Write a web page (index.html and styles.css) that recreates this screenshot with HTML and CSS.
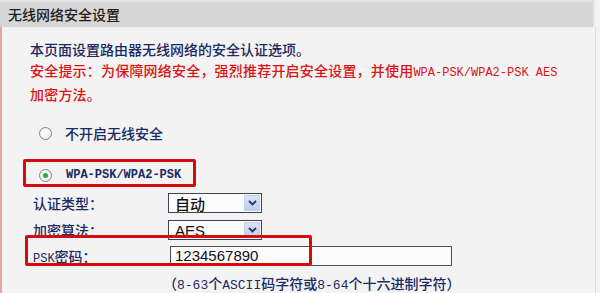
FILE: index.html
```html
<!DOCTYPE html>
<html lang="zh-CN">
<head>
<meta charset="utf-8">
<title>无线网络安全设置</title>
<link rel="stylesheet" href="styles.css">
</head>
<body>
<div class="page">
  <div class="header">无线网络安全设置</div>
  <div class="panel">
    <div class="intro">
      <p class="note">本页面设置路由器无线网络的安全认证选项。</p>
      <p class="warn">安全提示：为保障网络安全，强烈推荐开启安全设置，并使用<span class="en">WPA-PSK/WPA2-PSK AES</span></p>
      <p class="warn">加密方法。</p>
    </div>
    <div class="radio-row first">
      <span class="radio"></span>
      <span class="radio-label">不开启无线安全</span>
    </div>
    <div class="radio-row second">
      <span class="radio checked"></span>
      <span class="radio-label en bold">WPA-PSK/WPA2-PSK</span>
    </div>
    <div class="field auth">
      <span class="label">认证类型：</span>
      <span class="select"><span class="value">自动</span><span class="drop"><svg width="9" height="6" viewBox="0 0 9 6"><path d="M1 1 L4.5 4.5 L8 1" fill="none" stroke="#24356e" stroke-width="1.8"/></svg></span></span>
    </div>
    <div class="field algo">
      <span class="label">加密算法：</span>
      <span class="select"><span class="value latin">AES</span><span class="drop"><svg width="9" height="6" viewBox="0 0 9 6"><path d="M1 1 L4.5 4.5 L8 1" fill="none" stroke="#24356e" stroke-width="1.8"/></svg></span></span>
    </div>
    <div class="field psk">
      <span class="label"><span class="en">PSK</span>密码：</span>
      <span class="input">1234567890</span>
    </div>
    <p class="hint">（<span class="en wide">8-63</span>个<span class="en wide">ASCII</span>码字符或<span class="en wide">8-64</span>个十六进制字符）</p>
    <div class="mark mark-wpa"></div>
    <div class="mark mark-psk"></div>
  </div>
</div>
</body>
</html>
```
FILE: styles.css
```css
html, body {
  margin: 0;
  padding: 0;
  background: #f3f3f3;
}
.page {
  width: 600px;
  height: 293px;
  overflow: hidden;
  font-family: "Noto Sans CJK SC", "Noto Sans", sans-serif;
  font-size: 14px;
  font-weight: 500;
  color: #1b2a62;
}
.header {
  height: 27px;
  box-sizing: border-box;
  padding-left: 8px;
  background: #d6d6d6;
  border-top: 2px solid #e2e2e2;
  border-right: 2px solid #e6e6e6;
  line-height: 24px;
  color: #1e1e1e;
  font-size: 14px;
  margin-right: 5px;
}
.panel {
  position: relative;
  height: 266px;
  margin-right: 4px;
  border-left: 2px solid #e3a6a6;
  border-right: 1px solid #ead8d8;
  background: #f3f3f3;
}
.intro {
  padding-top: 12px;
  padding-left: 28px;
}
.intro p {
  margin: 0;
  line-height: 21px;
  white-space: nowrap;
}
.note { color: #1b2a62; }
.warn { color: #dc1414; letter-spacing: 0.2px; }
.en {
  font-family: "Liberation Mono", "Noto Sans CJK SC", monospace;
  font-size: 12px;
  letter-spacing: 0;
}
.en.wide { font-size: 13px; }
.bold { font-weight: bold; }
.radio-row {
  display: flex;
  align-items: center;
  height: 24px;
  padding-left: 37px;
}
.radio-row.first { margin-top: 16px; }
.radio-row.second { margin-top: 18px; }
.radio {
  width: 13px;
  height: 13px;
  box-sizing: border-box;
  border: 1px solid #7b8794;
  border-radius: 50%;
  background: radial-gradient(circle at 40% 40%, #ffffff 0%, #e3e7ed 100%);
  display: flex;
  align-items: center;
  justify-content: center;
}
.radio.checked::after {
  content: "";
  width: 5px;
  height: 5px;
  border-radius: 50%;
  background: #2fa83a;
}
.radio-label {
  margin-left: 13px;
  color: #1b2a62;
}
.radio-label.en { margin-left: 14px; }
.field {
  display: flex;
  align-items: center;
  height: 20px;
  padding-left: 31px;
}
.field.auth { margin-top: 6px; }
.field.algo { margin-top: 7px; }
.field.psk { margin-top: 6px; }
.label {
  width: 135px;
  flex: none;
  white-space: nowrap;
}
.select {
  width: 94px;
  height: 20px;
  box-sizing: border-box;
  border: 1px solid #3c4452;
  background: #fbfbfb;
  display: flex;
  align-items: center;
  justify-content: space-between;
  padding: 1px;
}
.value {
  padding-left: 5px;
  color: #111;
  font-size: 15px;
  line-height: 17px;
}
.value.latin { font-family: "Liberation Sans", Arial, sans-serif; font-weight: normal; }
.drop {
  width: 16px;
  height: 16px;
  background: linear-gradient(#dbe5f8, #bccdf0);
  border: 1px solid #c3d0ea;
  box-sizing: border-box;
  display: flex;
  align-items: center;
  justify-content: center;
}
.input {
  margin-left: 2px;
  width: 282px;
  height: 20px;
  box-sizing: border-box;
  border: 1px solid #4a5058;
  background: #fcfcfc;
  font-family: "Liberation Sans", Arial, sans-serif;
  font-weight: normal;
  font-size: 15px;
  line-height: 18px;
  padding-left: 4px;
  color: #111;
}
.hint {
  margin: 7px 0 0 161px;
  line-height: 20px;
  white-space: nowrap;
  color: #1b2a62;
}
.mark {
  position: absolute;
  border: 3px solid #d60c0c;
  border-radius: 2px;
  box-sizing: border-box;
}
.mark-wpa {
  left: 21px;
  top: 132px;
  width: 173px;
  height: 28px;
}
.mark-psk {
  left: 23px;
  top: 208px;
  width: 287px;
  height: 31px;
}
```
